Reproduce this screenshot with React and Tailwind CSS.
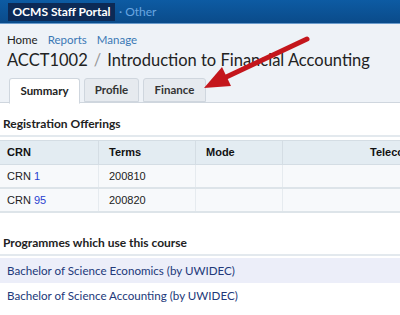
export default function App() {
  const ff = { fontFamily: 'Lato, "Open Sans", sans-serif' };
  return (
    <div className="relative w-[400px] h-[315px] overflow-hidden bg-white" style={ff}>
      <div className="h-[24px] bg-gradient-to-b from-[#0d5ba3] to-[#0a4b8a] flex items-center pl-[8px] border-b border-[#6a9bcc]">
        <div className="bg-[#0c2a56] text-white font-bold text-[12px] h-[18px] w-[107px] flex items-center justify-center">OCMS Staff Portal</div>
        <div className="ml-[4px] text-[12px] text-[#6aa6e0]">· Other</div>
      </div>
      <div className="bg-[#eef2f7] pt-[8px]">
        <div className="flex gap-[10px] px-[7px] text-[11.5px] leading-[16px]">
          <span className="text-[#222]">Home</span>
          <span className="text-[#3a78b5]">Reports</span>
          <span className="text-[#3a78b5]">Manage</span>
        </div>
        <div className="px-[7px] text-[16.5px] leading-[24px] text-[#222] whitespace-nowrap">
          ACCT1002<span className="text-[#999] mx-[6px]">/</span>Introduction to Financial Accounting
        </div>
        <div className="flex gap-[4px] pl-[9px] mt-[6px] border-b border-[#cfd6de] h-[25px]">
          <div className="bg-white border border-[#cfd6de] border-b-white rounded-t-[3px] w-[71px] justify-center text-[11.5px] font-bold text-[#222] flex items-center h-[26px]">Summary</div>
          <div className="bg-[#e6eaef] border border-[#cfd6de] rounded-t-[3px] w-[55px] justify-center text-[11.5px] font-bold text-[#333] flex items-center">Profile</div>
          <div className="bg-[#e6eaef] border border-[#cfd6de] rounded-t-[3px] w-[63px] justify-center text-[11.5px] font-bold text-[#333] flex items-center">Finance</div>
        </div>
      </div>
      <div className="pt-[13px]">
        <div className="px-[3px] text-[12px] leading-[16px] font-bold text-[#222] pb-[3px] border-b-2 border-[#e3e9ee]">Registration Offerings</div>
        <div className="mt-[3px]" style={{ fontFamily: '"Liberation Sans", Arial, sans-serif' }}>
          <div className="grid grid-cols-[99px_97px_87px_117px] h-[25px] bg-[#e3ecf2] border-y border-[#d4dde4] text-[11px] font-bold text-[#111]">
            <div className="pl-[7px] flex items-center border-r border-[#d4dde4]">CRN</div>
            <div className="pl-[10px] flex items-center border-r border-[#d4dde4]">Terms</div>
            <div className="pl-[10px] flex items-center border-r border-[#d4dde4]">Mode</div>
            <div className="pl-[87px] flex items-center whitespace-nowrap overflow-hidden">Telecomms</div>
          </div>
          {[["1", "200810"], ["95", "200820"]].map(([c, t]) => (
            <div key={c} className="grid grid-cols-[99px_97px_87px_117px] h-[24px] bg-[#f7f9fb] border-b-2 border-[#dde4e9] text-[11px] text-[#222]">
              <div className="pl-[7px] flex items-center border-r border-[#e6ebef]">CRN&nbsp;<span className="text-[#2a3fd0]">{c}</span></div>
              <div className="pl-[10px] flex items-center border-r border-[#e6ebef]">{t}</div>
              <div className="border-r border-[#e6ebef]"></div>
              <div></div>
            </div>
          ))}
        </div>
        <div className="mt-[22px] px-[3px] text-[12px] leading-[16px] font-bold text-[#222] pb-[3px] border-b-2 border-[#e3e9ee]">Programmes which use this course</div>
        <div className="mt-[2px] text-[11.6px] text-[#22397a]">
          <div className="h-[25px] bg-[#eceef9] flex items-center px-[7px]">Bachelor of Science Economics (by UWIDEC)</div>
          <div className="h-[25px] flex items-center px-[7px]">Bachelor of Science Accounting (by UWIDEC)</div>
        </div>
      </div>
      <svg className="absolute left-0 top-0" width="400" height="315" viewBox="0 0 400 315">
        <line x1="307" y1="39" x2="222" y2="79" stroke="#c4161c" strokeWidth="5" strokeLinecap="round" />
        <polygon points="204,88 222,67 231,86" fill="#c4161c" />
      </svg>
    </div>
  );
}
